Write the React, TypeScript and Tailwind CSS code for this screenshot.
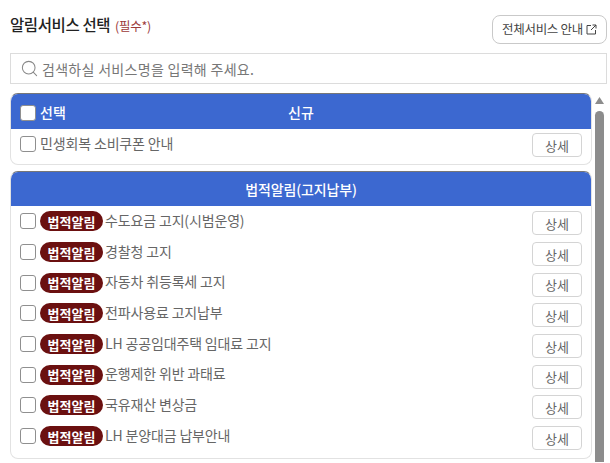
import { Search } from 'lucide-react';

const legalRows = [
  '수도요금 고지(시범운영)',
  '경찰청 고지',
  '자동차 취등록세 고지',
  '전파사용료 고지납부',
  'LH 공공임대주택 임대료 고지',
  '운행제한 위반 과태료',
  '국유재산 변상금',
  'LH 분양대금 납부안내',
];

function Check({ className = '' }: { className?: string }) {
  return <span className={`block w-[16px] h-[16px] shrink-0 rounded-[3px] border border-[#8f8f8f] bg-white ${className}`} />;
}

function DetailButton({ className = '' }: { className?: string }) {
  return (
    <button className={`w-[50px] h-[24px] shrink-0 rounded-[4px] border border-[#d4d4d4] bg-white text-[13px] leading-none text-[#666] ${className}`}>
      상세
    </button>
  );
}

function ServiceRow({ label, legal }: { label: string; legal?: boolean }) {
  return (
    <div className="flex items-center h-[30.7px] pl-[9px] pr-[9px]">
      <Check className={legal ? '-mt-[4px]' : ''} />
      {legal && (
        <span className="ml-[4px] -mt-[4px] flex items-center justify-center w-[63px] h-[20px] rounded-full bg-[#6b1010] text-white text-[13px] font-bold leading-none">
          법적알림
        </span>
      )}
      <span className={`${legal ? 'ml-[2px] -mt-[7px]' : 'ml-[4px] -mt-[2px]'} flex-1 text-[14px] leading-none tracking-[-0.15px] text-[#666]`}>{label}</span>
      <DetailButton className={legal ? '' : 'mt-[2px]'} />
    </div>
  );
}

export default function App() {
  return (
    <div className="w-[610px] h-[463px] overflow-hidden bg-white font-['Noto_Sans_CJK_KR','Noto_Sans',sans-serif]">
      {/* Title row */}
      <div className="flex items-start justify-between pl-[10px] pr-[3px] pt-[15px]">
        <div className="flex items-baseline gap-[5px] -mt-[1px]">
          <h1 className="text-[15.5px] font-medium leading-[20px] tracking-[-0.4px] text-[#222]">알림서비스 선택</h1>
          <span className="text-[12.5px] leading-[20px] tracking-[-0.3px] text-[#9c3a3a]">(필수*)</span>
        </div>
        <button className="flex items-center justify-center gap-[3px] w-[115px] h-[29px] rounded-[8px] border border-[#c9c9c9] bg-white text-[12.5px] leading-none tracking-[-0.3px] text-[#444]">
          전체서비스 안내
          <svg width="11" height="11" viewBox="0 0 11 11" fill="none" stroke="#444" strokeWidth="1">
            <path d="M5 1.5H1V10H9.5V6" />
            <path d="M6.5 1H10V4.5M10 1L5 6" />
          </svg>
        </button>
      </div>

      {/* Search */}
      <div className="ml-[10px] mt-[9px] flex items-center w-[597px] h-[31px] border border-[#dcdcdc] pl-[9px]">
        <Search size={19} strokeWidth={1.3} className="text-[#888] shrink-0" />
        <span className="ml-[3px] text-[14px] leading-none tracking-[0.3px] text-[#777]">검색하실 서비스명을 입력해 주세요.</span>
      </div>

      <div className="flex mt-[9px] pl-[10px]">
        <div className="w-[582px] shrink-0">
          {/* New services */}
          <section className="h-[72px] rounded-[8px] border border-[#e2e2e2] border-t-[#777] overflow-hidden">
            <div className="relative flex items-center h-[35px] pl-[9px] bg-[#3c68d0] text-white text-[14px] font-medium leading-none">
              <Check className="mt-[2px]" />
              <span className="ml-[4px]">선택</span>
              <span className="absolute left-0 right-0 text-center pointer-events-none">신규</span>
            </div>
            <ServiceRow label="민생회복 소비쿠폰 안내" />
          </section>

          {/* Legal notices */}
          <section className="mt-[6px] h-[288px] rounded-[8px] border border-[#e2e2e2] border-t-[#777] overflow-hidden">
            <div className="flex items-center justify-center h-[34px] bg-[#3c68d0] text-white text-[14px] font-medium leading-none tracking-[-0.15px]">
              법적알림(고지납부)
            </div>
            <div className="pt-[2px]">
              {legalRows.map((label) => (
                <ServiceRow key={label} label={label} legal />
              ))}
            </div>
          </section>
        </div>

        {/* Scrollbar */}
        <div className="ml-[3px] w-[9px] flex flex-col items-center h-[369px]">
          <svg width="9" height="7" viewBox="0 0 9 7" className="mt-[4px]">
            <path d="M4.5 0L9 7H0Z" fill="#8c8c8c" />
          </svg>
          <div className="mt-[7px] w-[9px] flex-1 rounded-t-full bg-[#8c8c8c]" />
        </div>
      </div>
    </div>
  );
}
